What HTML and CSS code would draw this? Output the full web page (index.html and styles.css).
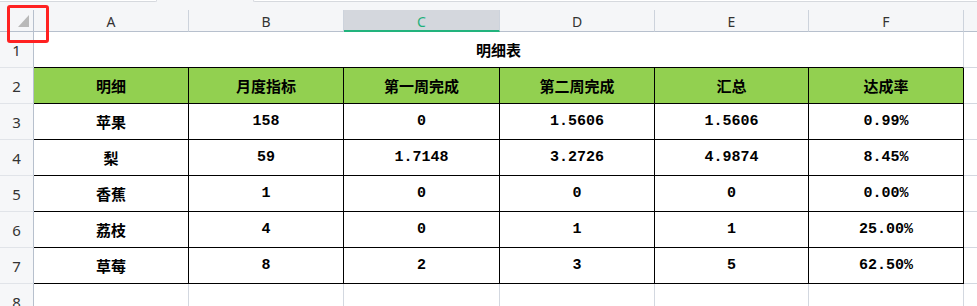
FILE: index.html
```html
<!DOCTYPE html>
<html lang="zh-CN">
<head>
<meta charset="utf-8">
<title>明细表</title>
<link rel="stylesheet" href="styles.css">
</head>
<body>
<div class="app">
  <div class="topbar">
    <div class="namebox"></div>
    <div class="formula"></div>
  </div>
  <div class="sheet">
    <div class="corner"><svg width="11" height="12" viewBox="0 0 11 12"><polygon points="11,0 11,12 0,12" fill="#b9b9b9"/></svg></div>
    <div class="ch">A</div>
    <div class="ch">B</div>
    <div class="ch sel">C</div>
    <div class="ch">D</div>
    <div class="ch">E</div>
    <div class="ch">F</div>
    <div class="ch last"></div>

    <div class="rh">1</div>
    <div class="title">明细表</div>
    <div class="x"></div>

    <div class="rh">2</div>
    <div class="g">明细</div>
    <div class="g">月度指标</div>
    <div class="g">第一周完成</div>
    <div class="g">第二周完成</div>
    <div class="g">汇总</div>
    <div class="g">达成率</div>
    <div class="x"></div>

    <div class="rh">3</div>
    <div class="d">苹果</div>
    <div class="d">158</div>
    <div class="d">0</div>
    <div class="d">1.5606</div>
    <div class="d">1.5606</div>
    <div class="d">0.99%</div>
    <div class="x"></div>

    <div class="rh">4</div>
    <div class="d">梨</div>
    <div class="d">59</div>
    <div class="d">1.7148</div>
    <div class="d">3.2726</div>
    <div class="d">4.9874</div>
    <div class="d">8.45%</div>
    <div class="x"></div>

    <div class="rh">5</div>
    <div class="d">香蕉</div>
    <div class="d">1</div>
    <div class="d">0</div>
    <div class="d">0</div>
    <div class="d">0</div>
    <div class="d">0.00%</div>
    <div class="x"></div>

    <div class="rh">6</div>
    <div class="d">荔枝</div>
    <div class="d">4</div>
    <div class="d">0</div>
    <div class="d">1</div>
    <div class="d">1</div>
    <div class="d">25.00%</div>
    <div class="x"></div>

    <div class="rh">7</div>
    <div class="d">草莓</div>
    <div class="d">8</div>
    <div class="d">2</div>
    <div class="d">3</div>
    <div class="d">5</div>
    <div class="d">62.50%</div>
    <div class="x"></div>

    <div class="rh">8</div>
    <div class="e"></div>
    <div class="e"></div>
    <div class="e"></div>
    <div class="e"></div>
    <div class="e"></div>
    <div class="e"></div>
    <div class="e last"></div>
  </div>
  <div class="select-mark"></div>
</div>
</body>
</html>
```

FILE: styles.css
```css
* { box-sizing: border-box; }
html, body {
  margin: 0;
  padding: 0;
  background: #ffffff;
  overflow: hidden;
}
.app {
  position: relative;
  width: 977px;
  height: 306px;
  overflow: hidden;
  font-family: "Liberation Mono", "Noto Sans CJK SC", monospace;
}
.topbar {
  display: flex;
  height: 10px;
  background: #f5f6f8;
}
.namebox {
  width: 157px;
  height: 2px;
  border-right: 1px solid #d6d9de;
  border-bottom: 1px solid #d6d9de;
  border-bottom-right-radius: 4px;
  background: #ffffff;
}
.formula {
  flex: 1;
  margin-left: 96px;
  height: 2px;
  border-left: 1px solid #d6d9de;
  border-bottom: 1px solid #d6d9de;
  border-bottom-left-radius: 4px;
  background: #ffffff;
}
.sheet {
  display: grid;
  grid-template-columns: 34px 155px 155px 156px 155px 154px 155px 1fr;
  grid-template-rows: 22px repeat(7, 36px) 36px;
}
.sheet > div {
  display: flex;
  align-items: center;
  justify-content: center;
}
.corner {
  background: #f5f6f8;
  border-right: 1px solid #b7c0cd;
  border-bottom: 1px solid #b7c0cd;
  justify-content: flex-end !important;
  align-items: flex-end !important;
  padding: 0 4px 4px 0;
}
.corner svg { display: block; }
.ch {
  background: #f5f6f8;
  border-right: 1px solid #cdd3dc;
  border-bottom: 1px solid #b7c0cd;
  font-family: "Noto Sans", "Open Sans", sans-serif;
  font-size: 14px;
  color: #333333;
  padding-top: 1px;
}
.ch.last { border-right: none; }
.ch.sel {
  background: #d4d7dd;
  color: #1fb07b;
  border-bottom: 2px solid #22b37d;
  padding-top: 2px;
}
.rh {
  background: #f6f7f9;
  border-right: 1px solid #b7c0cd;
  border-bottom: 1px solid #e1e4e9;
  font-family: "Noto Sans", "Open Sans", sans-serif;
  font-size: 15px;
  color: #333333;
}
.title {
  grid-column: span 6;
  border-right: 1px solid #d3d8e0;
  border-bottom: 1px solid #000000;
  font-size: 15px;
  font-weight: bold;
  color: #000000;
}
.g, .d {
  border-right: 1px solid #000000;
  border-bottom: 1px solid #000000;
  font-size: 15px;
  font-weight: bold;
  color: #000000;
}
.g { background: #92d050; }
.x { border-bottom: 1px solid #d3d8e0; }
.e { border-right: 1px solid #d3d8e0; }
.e.last { border-right: none; }
.select-mark {
  position: absolute;
  left: 7px;
  top: 5px;
  width: 42px;
  height: 38px;
  border: 3px solid #ff2121;
  border-radius: 3px;
}
```
